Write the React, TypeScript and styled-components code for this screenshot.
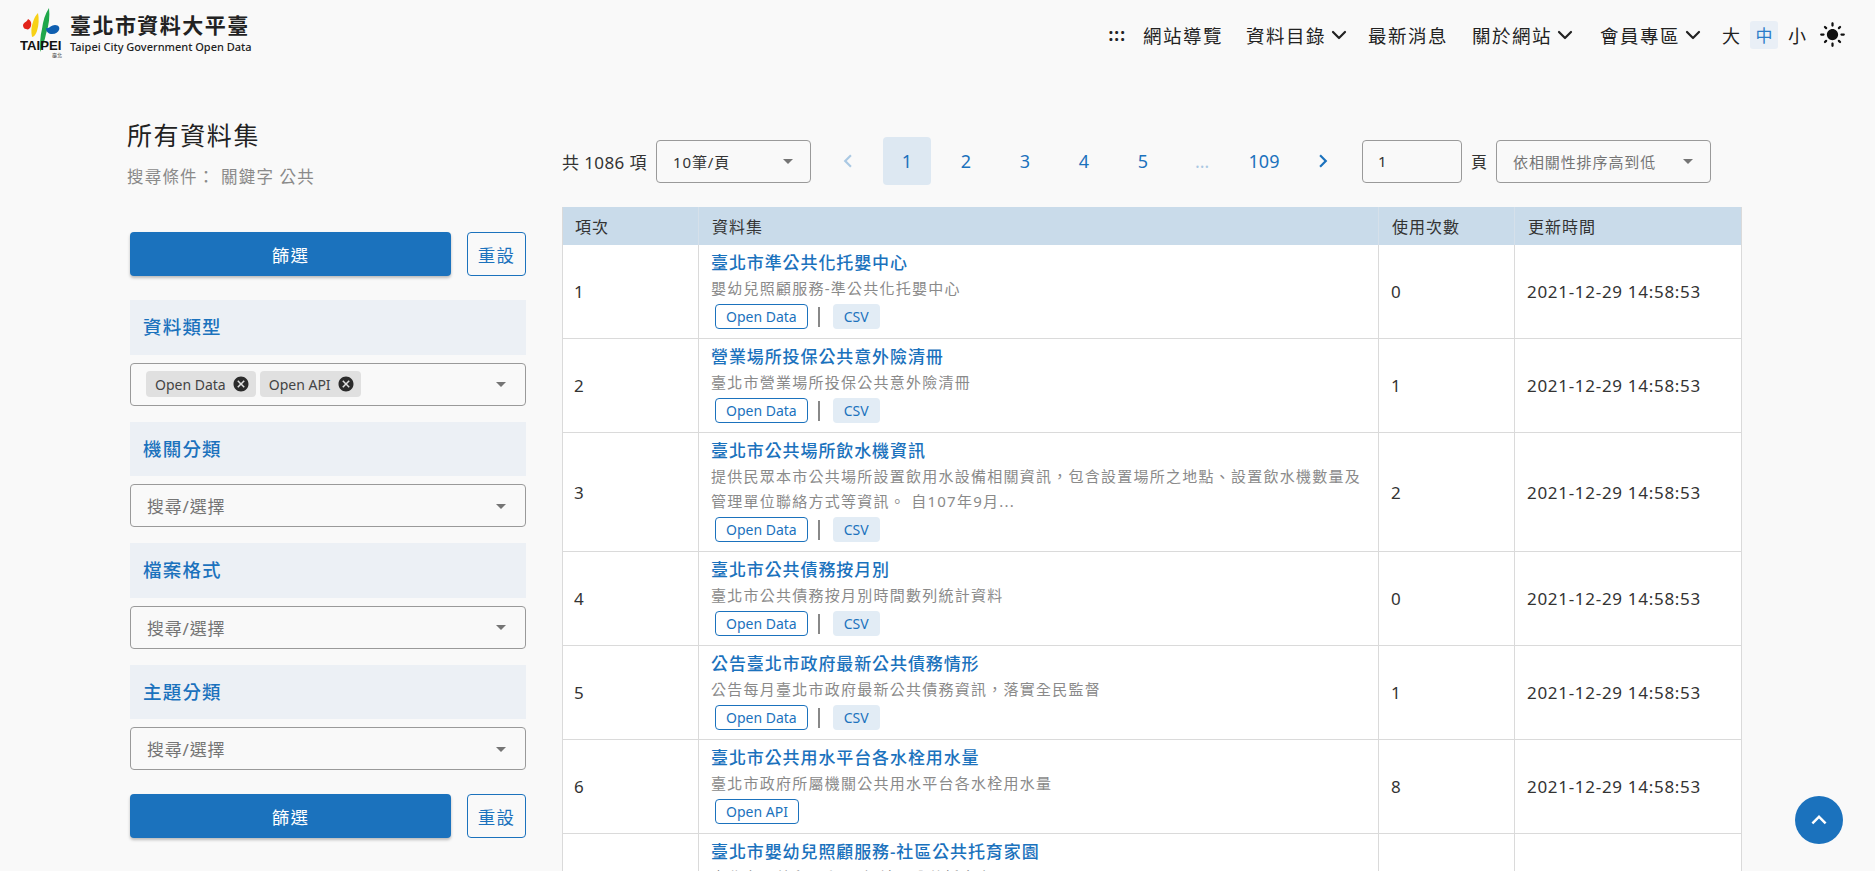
import { createGlobalStyle, styled } from 'styled-components';
import { ChevronDown } from 'lucide-react';
import {
  MdArrowDropDown,
  MdCancel,
  MdChevronLeft,
  MdChevronRight,
  MdKeyboardArrowUp,
  MdLightMode,
} from 'react-icons/md';

const blue = '#1b72bd';

const GlobalStyle = createGlobalStyle`
  html, body {
    margin: 0;
    height: 100%;
    overflow: hidden;
    background: #f9f9f9;
  }
  body {
    font-family: "Noto Sans", "Noto Sans CJK TC", sans-serif;
    color: #222;
  }
  * {
    box-sizing: border-box;
  }
`;

const Header = styled.header`
  display: flex;
  align-items: flex-start;
  justify-content: space-between;
  height: 87px;
  padding: 8px 29px 0 20px;
`;

const Brand = styled.div`
  display: flex;
  gap: 5px;
`;

const BrandText = styled.div`
  display: flex;
  flex-direction: column;
  padding-top: 3px;
`;

const BrandName = styled.div`
  font-size: 21px;
  line-height: 28px;
  font-weight: 700;
  letter-spacing: 1.45px;
  color: #222;
`;

const BrandSub = styled.div`
  font-size: 11px;
  line-height: 15px;
  font-weight: 500;
  color: #222;
`;

const Nav = styled.nav`
  display: flex;
  align-items: center;
  height: 53px;
`;

const NavDots = styled.span`
  font-size: 17px;
  font-weight: 700;
  letter-spacing: 1px;
  margin-right: 17px;
`;

const NavItem = styled.a<{ $gap: number }>`
  display: flex;
  align-items: center;
  font-size: 18.5px;
  letter-spacing: 1.5px;
  color: #222;
  margin-right: ${({ $gap }) => $gap}px;
`;

const NavChevron = styled(ChevronDown).attrs({ size: 24, strokeWidth: 2.2 })`
  margin: 0 -1px 0 1px;
`;

const SizeBtn = styled.span<{ $active?: boolean }>`
  display: flex;
  align-items: center;
  justify-content: center;
  width: 28px;
  height: 28px;
  margin-right: 5px;
  font-size: ${({ $active }) => ($active ? 17 : 18)}px;
  border-radius: 3px;
  color: ${({ $active }) => ($active ? '#2b7bc9' : '#222')};
  background: ${({ $active }) => ($active ? '#e9eff6' : 'transparent')};
`;

const SunIcon = styled(MdLightMode)`
  margin-left: 3px;
  font-size: 27px;
  color: #111;
`;

const Page = styled.main`
  display: flex;
  gap: 36px;
  padding-left: 127px;
`;

const Sidebar = styled.aside`
  width: 399px;
  flex-shrink: 0;
`;

const Title = styled.h1`
  margin: 32px 0 0;
  font-size: 25px;
  line-height: 32px;
  font-weight: 400;
  letter-spacing: 1.6px;
  color: #222;
`;

const SubTitle = styled.p`
  margin: 13px 0 0;
  font-size: 16.5px;
  line-height: 26px;
  letter-spacing: 1.2px;
  color: #8a8a8a;
`;

const Filters = styled.div`
  display: flex;
  flex-direction: column;
  margin-top: 42px;
  padding-left: 3px;
`;

const ButtonRow = styled.div`
  display: flex;
  gap: 16px;
  height: 44px;
`;

const SubmitBtn = styled.button`
  flex: 1;
  border: none;
  border-radius: 4px;
  background: ${blue};
  color: #fff;
  font: inherit;
  font-size: 17.5px;
  letter-spacing: 1.2px;
  box-shadow: 0 2px 3px rgba(0, 0, 0, 0.25);
`;

const ResetBtn = styled.button`
  width: 59px;
  padding: 0;
  border: 1px solid ${blue};
  border-radius: 4px;
  background: transparent;
  color: ${blue};
  font: inherit;
  font-size: 17.5px;
  letter-spacing: 1.2px;
`;

const FilterHead = styled.div`
  display: flex;
  align-items: center;
  height: 54.5px;
  margin-top: 16px;
  padding: 0 0 2px 13px;
  background: #ecf0f5;
  color: ${blue};
  font-size: 18.5px;
  font-weight: 500;
  letter-spacing: 1.2px;
`;

const FirstHeadGap = styled.div`
  height: 8px;
`;

const LastButtons = styled(ButtonRow)`
  margin-top: 24px;
`;

const SelectBox = styled.div`
  display: flex;
  align-items: center;
  justify-content: space-between;
  height: 43px;
  margin-top: 8px;
  padding: 0 12px 0 16px;
  border: 1px solid #9a9a9a;
  border-radius: 4px;
  color: #757575;
  font-size: 17px;
  letter-spacing: 0.8px;

  > svg {
    font-size: 24px;
    color: #757575;
  }
`;

const ChipBox = styled(SelectBox)`
  padding-left: 15px;
`;

const ChipList = styled.div`
  display: flex;
  gap: 4px;
`;

const Chip = styled.span`
  display: flex;
  align-items: center;
  gap: 6px;
  height: 26px;
  padding: 0 6px 0 9px;
  border-radius: 4px;
  background: #e0e0e0;
  color: #444;
  font-size: 14px;
  letter-spacing: 0;

  svg {
    font-size: 18px;
    color: #2b2b2b;
  }
`;

const Content = styled.section`
  width: 1180px;
  flex-shrink: 0;
`;

const Toolbar = styled.div`
  display: flex;
  align-items: center;
  height: 48px;
  margin-top: 50px;
`;

const Total = styled.span`
  width: 94px;
  font-size: 17px;
  letter-spacing: 0.4px;
  white-space: nowrap;
  color: #333;
`;

const ToolSelect = styled.div<{ $width: number; $muted?: boolean }>`
  display: flex;
  align-items: center;
  justify-content: space-between;
  width: ${({ $width }) => $width}px;
  height: 43px;
  padding: 0 10px 0 16px;
  border: 1px solid #9a9a9a;
  border-radius: 4px;
  font-size: 15px;
  letter-spacing: 0.9px;
  color: ${({ $muted }) => ($muted ? '#757575' : '#333')};

  svg {
    font-size: 24px;
    color: #757575;
  }
`;

const Pager = styled.div`
  display: flex;
  align-items: center;
  gap: 11px;
  margin: 0 15px 0 13px;
`;

const PageBtn = styled.span<{ $active?: boolean; $dim?: boolean; $last?: boolean }>`
  display: flex;
  align-items: center;
  justify-content: center;
  width: 48px;
  height: 48px;
  margin-left: ${({ $last }) => ($last ? 3 : 0)}px;
  border-radius: 4px;
  font-size: 18px;
  color: ${blue};
  background: ${({ $active }) => ($active ? '#dde8f2' : 'transparent')};
  opacity: ${({ $dim }) => ($dim ? 0.35 : 1)};

  svg {
    font-size: 26px;
  }
`;

const PageInput = styled.div`
  display: flex;
  align-items: center;
  width: 100px;
  height: 43px;
  padding-left: 15px;
  border: 1px solid #9a9a9a;
  border-radius: 4px;
  font-size: 15px;
  color: #333;
`;

const PageUnit = styled.span`
  width: 34px;
  padding-left: 9px;
  font-size: 16px;
  color: #333;
`;

const Table = styled.table`
  width: 1180px;
  margin-top: 22px;
  table-layout: fixed;
  border-collapse: collapse;
  background: #fff;
  border: 1px solid #dadada;
  border-top: none;
`;

const Th = styled.th<{ $width?: number }>`
  width: ${({ $width }) => ($width ? `${$width}px` : 'auto')};
  height: 38px;
  padding: 0 13px;
  background: #c9dbea;
  border-left: 1px solid #d5e0ea;
  font-size: 16px;
  font-weight: 400;
  letter-spacing: 1px;
  text-align: left;
  color: #333;

  &:first-child {
    border-left: none;
    padding-left: 12px;
  }
`;

const Td = styled.td`
  padding: 0 12px;
  border-left: 1px solid #dadada;
  border-bottom: 1px solid #dadada;
  font-size: 17px;
  letter-spacing: 0.7px;
  color: #333;
  vertical-align: middle;

  &:first-child {
    border-left: none;
    padding-left: 11px;
  }
`;

const DataCell = styled(Td)`
  padding: 5px 13px 9px 12px;
  vertical-align: top;
`;

const RowTitle = styled.a`
  display: block;
  font-size: 17px;
  line-height: 26px;
  font-weight: 500;
  letter-spacing: 0.9px;
  color: ${blue};
`;

const RowDesc = styled.p`
  margin: 0;
  font-size: 15px;
  line-height: 25px;
  letter-spacing: 1.25px;
  color: #8a8a8a;
`;

const Tags = styled.div`
  display: flex;
  align-items: center;
  margin: 3px 0 0 4px;
`;

const OutlineTag = styled.span`
  display: flex;
  align-items: center;
  justify-content: center;
  height: 25px;
  padding: 0 10px;
  border: 1px solid ${blue};
  border-radius: 4px;
  font-size: 14px;
  letter-spacing: 0;
  color: ${blue};
`;

const Sep = styled.span`
  width: 2px;
  height: 20px;
  margin: 0 13px 0 10px;
  background: #888;
`;

const FillTag = styled.span`
  display: flex;
  align-items: center;
  height: 25px;
  padding: 0 11px;
  border-radius: 4px;
  background: #e2ecf5;
  font-size: 14px;
  letter-spacing: 0;
  color: ${blue};
`;

const BackTop = styled.button`
  position: fixed;
  right: 32px;
  bottom: 27px;
  display: flex;
  align-items: center;
  justify-content: center;
  width: 48px;
  height: 48px;
  padding: 0;
  border: none;
  border-radius: 50%;
  background: ${blue};
  color: #fff;
  font-size: 30px;
`;

const LogoSvg = styled.svg`
  display: block;
  flex-shrink: 0;
`;

const rows = [
  {
    title: '臺北市準公共化托嬰中心',
    desc: '嬰幼兒照顧服務-準公共化托嬰中心',
    type: 'Open Data',
    format: 'CSV',
    uses: 0,
    time: '2021-12-29 14:58:53',
  },
  {
    title: '營業場所投保公共意外險清冊',
    desc: '臺北市營業場所投保公共意外險清冊',
    type: 'Open Data',
    format: 'CSV',
    uses: 1,
    time: '2021-12-29 14:58:53',
  },
  {
    title: '臺北市公共場所飲水機資訊',
    desc: '提供民眾本市公共場所設置飲用水設備相關資訊，包含設置場所之地點、設置飲水機數量及管理單位聯絡方式等資訊。 自107年9月...',
    type: 'Open Data',
    format: 'CSV',
    uses: 2,
    time: '2021-12-29 14:58:53',
  },
  {
    title: '臺北市公共債務按月別',
    desc: '臺北市公共債務按月別時間數列統計資料',
    type: 'Open Data',
    format: 'CSV',
    uses: 0,
    time: '2021-12-29 14:58:53',
  },
  {
    title: '公告臺北市政府最新公共債務情形',
    desc: '公告每月臺北市政府最新公共債務資訊，落實全民監督',
    type: 'Open Data',
    format: 'CSV',
    uses: 1,
    time: '2021-12-29 14:58:53',
  },
  {
    title: '臺北市公共用水平台各水栓用水量',
    desc: '臺北市政府所屬機關公共用水平台各水栓用水量',
    type: 'Open API',
    uses: 8,
    time: '2021-12-29 14:58:53',
  },
  {
    title: '臺北市嬰幼兒照顧服務-社區公共托育家園',
    desc: '臺北市嬰幼兒照顧服務-社區公共托育家園',
    type: 'Open Data',
    format: 'CSV',
    uses: 3,
    time: '2021-12-29 14:58:53',
  },
];

function Logo() {
  return (
    <LogoSvg width="45" height="50" viewBox="0 0 45 50">
      <path d="M3 17c1-3 4-3 5-6 2 1 4 3 3 7-1 3-3 4-5 3-2 0-3-2-3-4z" fill="#e2231a" />
      <path d="M18 5c1 5 1 12-1 18-1 3-3 6-5 6-1-5-1-10 1-15 1-4 3-7 5-9z" fill="#f7d117" />
      <path d="M29 0c1 8 0 17-3 26-1 5-3 12-6 18 0-8 0-16 2-23 1-8 3-15 7-21z" fill="#1fa74a" />
      <path d="M26 20c3 1 5-3 9-3s5 3 4 5-3 4-7 4c-3 0-6-2-6-6z" fill="#0f5fb0" />
      <text x="0" y="42" fontFamily="Liberation Sans, sans-serif" fontSize="13.2" fontWeight="700" fill="#111">
        TAIPEI
      </text>
      <text x="32" y="49" fontFamily="Noto Sans CJK TC, sans-serif" fontSize="5" fill="#444">
        臺北
      </text>
    </LogoSvg>
  );
}

function FilterButtons() {
  return (
    <>
      <SubmitBtn>篩選</SubmitBtn>
      <ResetBtn>重設</ResetBtn>
    </>
  );
}

export default function App() {
  return (
    <>
      <GlobalStyle />
      <Header>
        <Brand>
          <Logo />
          <BrandText>
            <BrandName>臺北市資料大平臺</BrandName>
            <BrandSub>Taipei City Government Open Data</BrandSub>
          </BrandText>
        </Brand>
        <Nav>
          <NavDots>:::</NavDots>
          <NavItem $gap={23}>網站導覽</NavItem>
          <NavItem $gap={18}>
            資料目錄
            <NavChevron />
          </NavItem>
          <NavItem $gap={24}>最新消息</NavItem>
          <NavItem $gap={24}>
            關於網站
            <NavChevron />
          </NavItem>
          <NavItem $gap={13}>
            會員專區
            <NavChevron />
          </NavItem>
          <SizeBtn>大</SizeBtn>
          <SizeBtn $active>中</SizeBtn>
          <SizeBtn>小</SizeBtn>
          <SunIcon />
        </Nav>
      </Header>
      <Page>
        <Sidebar>
          <Title>所有資料集</Title>
          <SubTitle>搜尋條件： 關鍵字 公共</SubTitle>
          <Filters>
            <ButtonRow>
              <FilterButtons />
            </ButtonRow>
            <FirstHeadGap />
            <FilterHead>資料類型</FilterHead>
            <ChipBox>
              <ChipList>
                <Chip>
                  Open Data
                  <MdCancel />
                </Chip>
                <Chip>
                  Open API
                  <MdCancel />
                </Chip>
              </ChipList>
              <MdArrowDropDown />
            </ChipBox>
            <FilterHead>機關分類</FilterHead>
            <SelectBox>
              搜尋/選擇
              <MdArrowDropDown />
            </SelectBox>
            <FilterHead>檔案格式</FilterHead>
            <SelectBox>
              搜尋/選擇
              <MdArrowDropDown />
            </SelectBox>
            <FilterHead>主題分類</FilterHead>
            <SelectBox>
              搜尋/選擇
              <MdArrowDropDown />
            </SelectBox>
            <LastButtons>
              <FilterButtons />
            </LastButtons>
          </Filters>
        </Sidebar>
        <Content>
          <Toolbar>
            <Total>共 1086 項</Total>
            <ToolSelect $width={155}>
              10筆/頁
              <MdArrowDropDown />
            </ToolSelect>
            <Pager>
              <PageBtn $dim>
                <MdChevronLeft />
              </PageBtn>
              <PageBtn $active>1</PageBtn>
              <PageBtn>2</PageBtn>
              <PageBtn>3</PageBtn>
              <PageBtn>4</PageBtn>
              <PageBtn>5</PageBtn>
              <PageBtn $dim>…</PageBtn>
              <PageBtn $last>109</PageBtn>
              <PageBtn>
                <MdChevronRight />
              </PageBtn>
            </Pager>
            <PageInput>1</PageInput>
            <PageUnit>頁</PageUnit>
            <ToolSelect $width={215} $muted>
              依相關性排序高到低
              <MdArrowDropDown />
            </ToolSelect>
          </Toolbar>
          <Table>
            <thead>
              <tr>
                <Th $width={136}>項次</Th>
                <Th>資料集</Th>
                <Th $width={136}>使用次數</Th>
                <Th $width={227}>更新時間</Th>
              </tr>
            </thead>
            <tbody>
              {rows.map((row, index) => (
                <tr key={index}>
                  <Td>{index + 1}</Td>
                  <DataCell>
                    <RowTitle>{row.title}</RowTitle>
                    <RowDesc>{row.desc}</RowDesc>
                    <Tags>
                      <OutlineTag>{row.type}</OutlineTag>
                      {row.format && (
                        <>
                          <Sep />
                          <FillTag>{row.format}</FillTag>
                        </>
                      )}
                    </Tags>
                  </DataCell>
                  <Td>{row.uses}</Td>
                  <Td>{row.time}</Td>
                </tr>
              ))}
            </tbody>
          </Table>
        </Content>
      </Page>
      <BackTop>
        <MdKeyboardArrowUp />
      </BackTop>
    </>
  );
}
